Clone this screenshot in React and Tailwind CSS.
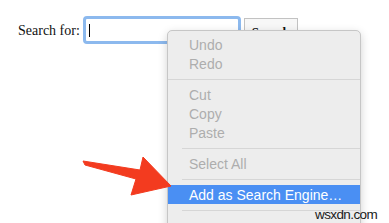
import React from "react";

const items = [
  { type: "item", label: "Undo" },
  { type: "item", label: "Redo" },
  { type: "sep", full: true },
  { type: "item", label: "Cut" },
  { type: "item", label: "Copy" },
  { type: "item", label: "Paste" },
  { type: "sep" },
  { type: "item", label: "Select All" },
  { type: "sep" },
  { type: "item", label: "Add as Search Engine…", active: true },
  { type: "sep" },
  { type: "item", label: "" },
];

function ContextMenu() {
  return (
    <div className="absolute left-[167px] top-[30px] w-[194px] h-[210px] rounded-[5px] border border-[#c6c6c6] bg-[#ededed] shadow-[0_3px_10px_rgba(0,0,0,0.18)] pt-[4px] overflow-hidden">
      {items.map((it, i) =>
        it.type === "sep" ? (
          <div key={i} className={"h-[12px] flex items-center " + (it.full ? "" : "pl-[14px]")}>
            <div className="h-px w-full bg-[#d6d6d6]" />
          </div>
        ) : (
          <div
            key={i}
            className={
              "h-[19px] flex items-center pl-[21px] text-[14px] leading-none " +
              (it.active ? "bg-[#4a8ff3] text-white" : "text-[#adadad]")
            }
          >
            {it.label}
          </div>
        )
      )}
    </div>
  );
}

function Arrow() {
  return (
    <svg className="absolute left-0 top-0 pointer-events-none" width="389" height="223" viewBox="0 0 389 223">
      <polygon
        points="83,161 140,170 143,157 171,186 131,195 136,179 85,165"
        fill="#f33b1f"
        strokeLinejoin="round"
        stroke="#f33b1f"
        strokeWidth="1"
      />
    </svg>
  );
}

export default function App() {
  return (
    <div
      className="relative w-[389px] h-[223px] overflow-hidden bg-white"
      style={{ fontFamily: '"Liberation Sans", Arial, sans-serif' }}
    >
      {/* form row */}
      <div className="flex items-center pt-[16px] pl-[18px]">
        <span className="text-[14px] text-[#111] mr-[3px]" style={{ fontFamily: '"Liberation Serif", "Times New Roman", serif' }}>
          Search for:
        </span>
        <div className="w-[158px] h-[28px] rounded-[4px] border-[3px] border-[#8cb9ee] bg-white flex items-center pl-[3px]">
          <div className="w-px h-[13px] bg-black" />
        </div>
        <div
          className="ml-[3px] self-start mt-[2px] w-[54px] h-[24px] border border-[#c2c2c2] bg-[#f7f7f7] flex justify-center pt-[5px] text-[13px] font-bold leading-[15px] text-[#111]"
          style={{ fontFamily: '"Liberation Serif", "Times New Roman", serif' }}
        >
          Search
        </div>
      </div>

      <ContextMenu />
      <Arrow />

      <div className="absolute left-[315px] top-[205px] text-[13.5px] tracking-[-0.6px] text-[#1a1a1a]">
        wsxdn.com
      </div>
    </div>
  );
}
